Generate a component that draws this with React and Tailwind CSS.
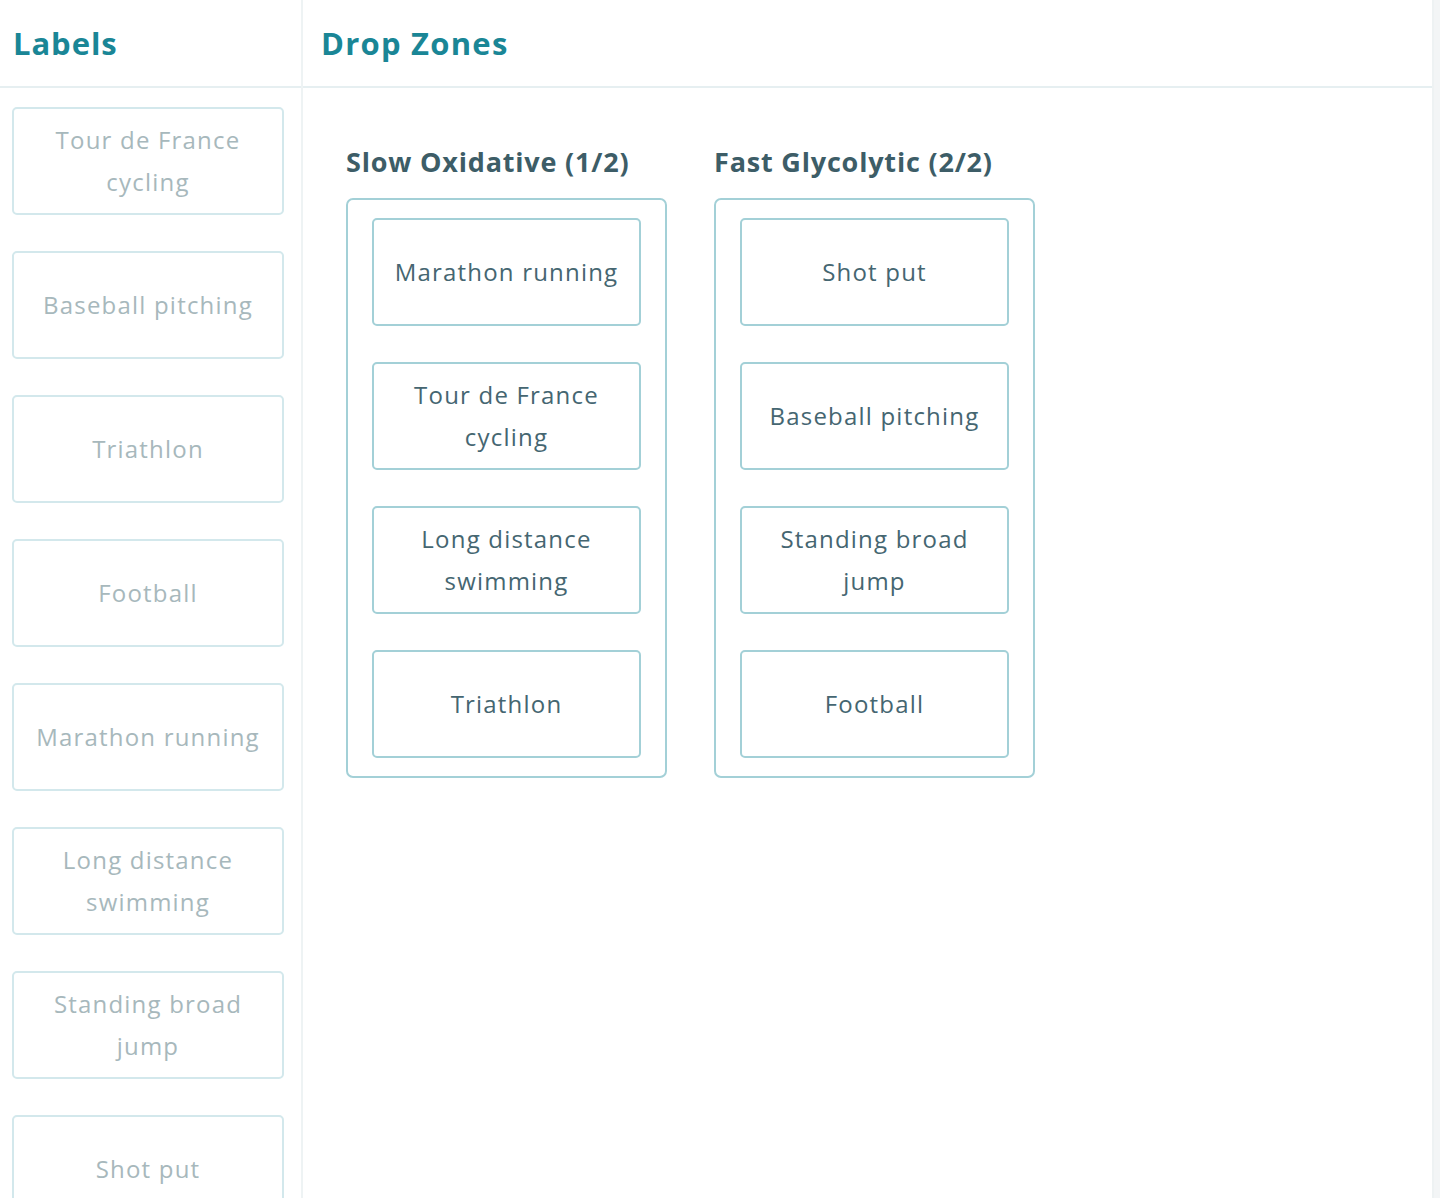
import React from 'react';

const labels = [
  'Tour de France cycling',
  'Baseball pitching',
  'Triathlon',
  'Football',
  'Marathon running',
  'Long distance swimming',
  'Standing broad jump',
  'Shot put',
];

const zones = [
  { title: 'Slow Oxidative (1/2)', items: ['Marathon running', 'Tour de France cycling', 'Long distance swimming', 'Triathlon'] },
  { title: 'Fast Glycolytic (2/2)', items: ['Shot put', 'Baseball pitching', 'Standing broad jump', 'Football'] },
];

function Card({ text, faded }) {
  return (
    <div
      className={`h-[108px] rounded-[5px] border-2 flex items-center justify-center text-center px-3 text-[24px] leading-[42px] tracking-[0.05em] ${
        faded ? 'border-[#d3e8ec] text-[#a7b8bc]' : 'border-[#a3d0d7] text-[#456671]'
      }`}
    >
      <span className="max-w-[228px]">{text}</span>
    </div>
  );
}

export default function App() {
  return (
    <div className="h-[1198px] w-[1440px] overflow-hidden flex bg-white" style={{ fontFamily: '"Open Sans", "Lato", sans-serif' }}>
      <div className="w-[1434px] flex border-r-2 border-[#eef2f3]">
        {/* labels column */}
        <div className="w-[303px] shrink-0 border-r-2 border-[#eef3f4] flex flex-col">
          <div className="h-[88px] shrink-0 border-b-2 border-[#e6eff1] flex items-center pl-[13px]">
            <h1 className="text-[31px] font-bold tracking-[0.03em] text-[#1a8696]">Labels</h1>
          </div>
          <div className="flex flex-col gap-[36px] pt-[19px] pl-[12px] pr-[17px]">
            {labels.map(l => (
              <Card key={l} text={l} faded />
            ))}
          </div>
        </div>

        {/* drop zones */}
        <div className="flex-1 flex flex-col">
          <div className="h-[88px] shrink-0 border-b-2 border-[#e6eff1] flex items-center pl-[18px]">
            <h1 className="text-[31px] font-bold tracking-[0.04em] text-[#1a8696]">Drop Zones</h1>
          </div>
          <div className="flex gap-[47px] pl-[43px] pt-[56px]">
            {zones.map(z => (
              <div key={z.title} className="w-[321px]">
                <h2 className="text-[27px] font-bold tracking-[0.03em] text-[#3d5d67] leading-[36px] mb-[18px] whitespace-nowrap">{z.title}</h2>
                <div className="border-2 border-[#a3d0d7] rounded-[7px] pt-[18px] pb-[18px] px-[24px] flex flex-col gap-[36px]">
                  {z.items.map(i => (
                    <Card key={i} text={i} />
                  ))}
                </div>
              </div>
            ))}
          </div>
        </div>
      </div>
      <div className="flex-1 bg-[#f3f5f6]" />
    </div>
  );
}
